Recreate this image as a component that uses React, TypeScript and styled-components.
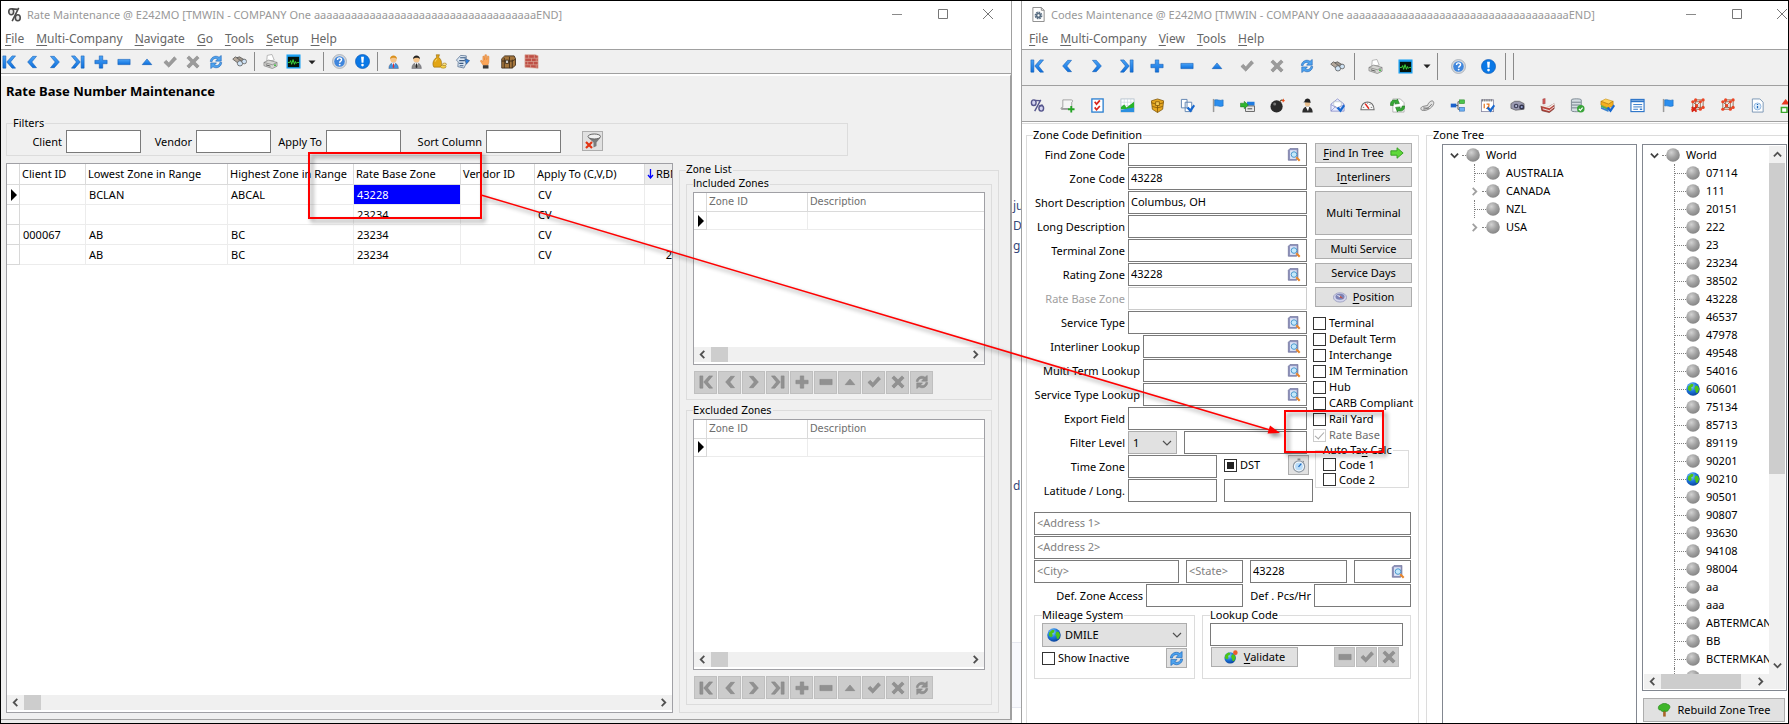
import React, { useEffect, useRef } from 'react';
import styled, { createGlobalStyle, css } from 'styled-components';

const UI = '"Noto Sans", "Open Sans", sans-serif';
const TAHOMA = '"DejaVu Sans Condensed", "DejaVu Sans", sans-serif';

const Global = createGlobalStyle`
  *, *::before, *::after { box-sizing: border-box; }
  body { margin: 0; font: 11px/14px ${UI}; color: #000; background: #fff; }
  button, input, select { font: inherit; color: inherit; margin: 0; border-radius: 0; }
  button { padding: 0; }
  u { text-underline-offset: 2px; }
  svg { display: block; flex: none; }
`;

/* ---------- icons ---------- */

const shapes: Record<string, React.ReactNode> = {
  first: <path d="M1 1h3.400v14H1zM11.500 1h4L9.800 8l5.700 7h-4L5.400 8z" />,
  prev: <path d="M8.800 1.500h4.400L7.800 8l5.400 6.500H8.800L3 8z" />,
  next: <path d="M7.200 1.500H2.800L8.200 8l-5.400 6.500h4.400L13 8z" />,
  last: <path d="M15 1h-3.400v14H15zM4.500 1h-4L6.200 8 .5 15h4l6.100-7z" />,
  plus: <path d="M6 1h4v5h5v4h-5v5H6v-5H1V6h5z" />,
  minus: <path d="M1 5h14v6H1z" />,
  up: <path d="M8 4.500 13.500 11h-11z" />,
  check: <path d="M1 8.500 3.800 6l2.800 3L12.800 2 15.500 4.500 6.600 14z" />,
  cross: <path d="M1 3.500 3.500 1 8 5.500 12.500 1 15 3.500 10.500 8l4.500 4.500-2.500 2.500L8 10.500 3.500 15 1 12.500 5.500 8z" />,
  refresh: (
    <path d="M1.500 7.500C1.500 3 7-.5 11.500 2.500L14 .5V7H7.500l2.300-2.600C7.200 3 4 4.500 3.600 7.500zM14.500 8.500c0 4.500-5.500 8-10 5L2 15.500V9h6.500l-2.300 2.600c2.600 1.400 5.800-.1 6.200-3.100z" />
  ),
};

const globeLand = <path d="M2.500 5 6 2l2.500.5L8 5l-2 1 .5 3-2 1.500L2 8.500zM11 4l2.500.5L15 8l-1.500 4-2 .5L10.500 9l-1-2z" fill="#4cc417" />;
const flag = (
  <>
    <path d="M3 1h1.600v14H3z" fill="#9a9a9a" />
    <path d="M5 2c3-1 5 1.500 9 0v6.500c-4 1.500-6-1-9 0z" fill="#2b8ff0" stroke="#1466b8" strokeWidth=".6" />
  </>
);
const tick = <path d="M7 11l2-1.700 2 2.200L14.500 7l1.500 1.500-4.700 7z" fill="#1768cf" />;
const person = (suit: string, hair: string, tie: string) => (
  <>
    <path d="M3 15.500c0-4 2-6 5-6s5.200 2 5.200 6z" fill={suit} stroke="#445" strokeWidth=".4" />
    <path d="M6.300 9.500h3.400L8 13.500z" fill="#fff" />
    <path d="M7.500 10h1l.4 4-.9 1-.9-1z" fill={tie} />
    <circle cx="8" cy="5.500" r="3.400" fill="#f6c58a" />
    <path d="M4.400 5.500C4 .3 12 .3 11.600 5.500 10 3.500 6.500 3.500 4.400 5.500z" fill={hair} />
  </>
);
const mesh = (
  <>
    <path d="M3 4h8v8H3zM11 4l3-2v8l-3 2M3 4l3-2h8M3 12l3-2h8M6 2v8M3 4l8 8M11 4l-8 8" fill="none" stroke="#8d5a3c" strokeWidth=".9" />
    {[[3, 4], [11, 4], [3, 12], [11, 12], [6, 2], [14, 2], [14, 10], [7, 8]].map(([x, y]) => (
      <circle key={`${x}-${y}`} cx={x} cy={y} r="1.700" fill="#ee4423" />
    ))}
  </>
);

const pictures: Record<string, React.ReactNode> = {
  binoculars: (
    <g stroke="#555" strokeWidth=".8">
      <path d="M.8 5.500 3.500 3l6 3-1.500 5z" fill="#b5a99c" />
      <path d="M5 4l3-1 6.500 4-3 2z" fill="#9d9489" />
      <circle cx="8.500" cy="10" r="2.800" fill="#cfe3f5" />
      <circle cx="13" cy="8" r="2.500" fill="#cfe3f5" />
    </g>
  ),
  printer: (
    <>
      <path d="M4 8 4.500 1.500l5-1 2.500 6z" fill="#fff" stroke="#999" strokeWidth=".7" />
      <path d="M1 9l5-2.500 9 2.500v4l-5 2.500L1 12.500z" fill="#d5d5d2" stroke="#777" strokeWidth=".7" />
      <path d="M1 9l9 2.500 5-2.500" fill="none" stroke="#777" strokeWidth=".7" />
      <path d="M3 11.500l5 1.500" stroke="#555" />
      <circle cx="12.800" cy="12" r="1" fill="#3b3" />
    </>
  ),
  monitor: (
    <>
      <rect x=".5" y=".5" width="15" height="15" fill="#1da1f2" />
      <rect x="2" y="3" width="12" height="11" fill="#04140a" />
      <path d="M2 9h2l1-2 1 4 1.500-5L9 11l1-3 1 2 1-1h2" fill="none" stroke="#3fe03f" />
    </>
  ),
  help: (
    <>
      <circle cx="8" cy="8" r="7.500" fill="#d3d7dd" stroke="#8b95a3" strokeWidth=".6" />
      <circle cx="8" cy="8" r="5.600" fill="#3f86dd" />
      <path d="M5.900 6.300c0-2.900 4.400-2.800 4.300-.2 0 1.500-2 1.600-2 3.200" fill="none" stroke="#fff" strokeWidth="1.500" />
      <circle cx="8.200" cy="11.300" r="1" fill="#fff" />
    </>
  ),
  alert: (
    <>
      <circle cx="8" cy="8" r="7.500" fill="#0a78e6" stroke="#0757b5" strokeWidth=".7" />
      <path d="M6.500 3h3L9 9.200H7z" fill="#fff" />
      <circle cx="8" cy="11.800" r="1.400" fill="#fff" />
    </>
  ),
  personBlue: person('#3f93e0', '#d9901c', '#d33'),
  personGray: person('#8b8b8b', '#222', '#222'),
  money: (
    <>
      <path d="M4.500.8h3.500l-1 2.700C11 6 11 13 9 14H2C0 11 1 6 5 3.500z" fill="#e2a514" stroke="#8f6508" strokeWidth=".6" />
      <path d="M3.500 8c.5-1.500 1-2 2-2.500" fill="none" stroke="#fbe38a" />
      <ellipse cx="12" cy="13.500" rx="3" ry="1.600" fill="#f7d24a" stroke="#9a7410" strokeWidth=".6" />
      <ellipse cx="13.300" cy="11" rx="2.200" ry="1.300" fill="#fbe38a" stroke="#9a7410" strokeWidth=".6" />
    </>
  ),
  roller: (
    <g stroke="#3b5a80" strokeWidth=".7">
      <path d="M1.500 6.500 6 1.500l6 .5 0 4 2.500 1-3 4-2 4-6.500-1.500.5-5z" fill="#dbe6f2" />
      <path d="M5.500 4h6M4.500 7h6M4.500 10H9M5 12.500h4" strokeWidth="1.200" />
      <path d="M10.500 5l5 2-3.500 4z" fill="#2b7de0" />
    </g>
  ),
  hand: (
    <>
      <path d="M5 11.500 2.500 7.500l1-1L5.200 8V2.500l1.400-.3.400 4L7.400.8 9 .8l.2 5.200 1-4 1.500.5L11.500 9l-1 3H6z" fill="#f9a55a" stroke="#d87a2a" strokeWidth=".5" />
      <rect x="5.200" y="12" width="6" height="3.500" fill="#3a3a3a" />
    </>
  ),
  chest: (
    <g stroke="#3a2a18" strokeWidth=".9">
      <path d="M.8 5 4 2h10l1.500 3v7L12 15H.8z" fill="#a5763c" />
      <path d="M.8 7.500H12l3.500-2M12 15V6M3.500 4v11M9 3v12" fill="none" />
      <rect x="5" y="6.500" width="2.800" height="3.500" fill="#e2e2e2" />
    </g>
  ),
  wall: (
    <g stroke="#dba898" strokeWidth=".7">
      <path d="M1 .8h11l3 1v13.500l-3-.3-11-1z" fill="#bf4f45" />
      <path d="M1 4.500h14M1 8h14M1 11.500h14M5 1v3.500M11 1v3.500M8 4.500V8M13 4.500V8M4 8v3.500M10 8v3.500M7 11.500V15M13 11.500V15" fill="none" />
    </g>
  ),
  percent: (
    <g fill="none" stroke="#55558c" strokeWidth="1.500">
      <ellipse cx="4" cy="5" rx="2.500" ry="3" fill="#d4d4f0" />
      <ellipse cx="12" cy="11" rx="2.500" ry="3" fill="#d4d4f0" />
      <path d="M11.500 2 5 14M5 2.500l6 .5M10 8.500l3.500-1" />
    </g>
  ),
  percentGray: (
    <g fill="none" stroke="#4a4a4a" strokeWidth="1.700">
      <ellipse cx="4.500" cy="5" rx="2.600" ry="3.200" fill="#e6e6e6" />
      <ellipse cx="11.500" cy="11.500" rx="2.600" ry="3.200" fill="#e6e6e6" />
      <path d="M12.500 1 5.500 15M5 2l6 .5" />
    </g>
  ),
  docGear: (
    <>
      <path d="M2 .5h9l3 3v12H2z" fill="#fff" stroke="#888" />
      <path d="M11 .5v3h3" fill="none" stroke="#888" />
      <circle cx="8" cy="9" r="3" fill="none" stroke="#5c7084" strokeWidth="2.400" strokeDasharray="1.600 .7" />
      <circle cx="8" cy="9" r="2" fill="none" stroke="#5c7084" strokeWidth="1.600" />
    </>
  ),
  scroll: (
    <>
      <path d="M3 2h9c2 0 2 2 .5 2.500V12H4c-3 1-4-1.500-2-2h1z" fill="#f4f4f4" stroke="#8d8d8d" strokeWidth=".8" />
      <path d="M1.500 11.500H9" stroke="#777" />
      <path d="M12 8.500v7M8.500 12h7" stroke="#25a325" strokeWidth="2" />
    </>
  ),
  checklist: (
    <>
      <rect x="2" y="1" width="12" height="14" fill="#fff" stroke="#2a7fd0" strokeWidth="1.400" />
      <path d="M5 4l2 2.500L10.500 2.500M5 10l2 2.500 3.500-4" fill="none" stroke="#d8261c" strokeWidth="1.800" />
    </>
  ),
  chart: (
    <>
      <rect x="1" y="1" width="14" height="14" fill="#fff" stroke="#a9b8c6" strokeWidth=".8" />
      <path d="M1 4.500h14M4.500 1v14M8 1v14M11.500 1v14M1 8h14" stroke="#c9d5e0" strokeWidth=".7" />
      <path d="M1 12V9.500L4.500 7l2.500 3 8-6v8z" fill="#27b327" />
      <path d="M1 12.500l6-1 8-1.500v5H1z" fill="#2b8fe0" />
    </>
  ),
  box: (
    <g stroke="#7b5206" strokeWidth=".8">
      <path d="M8 1l6.500 2-1 9L8 15.500 2.500 12l-1-9z" fill="#e6a720" />
      <path d="M1.500 5 8 7l6.500-2M8 7v8.500M2.500 9 8 10.500 13.500 9" fill="none" />
      <path d="M6 4h4v4H6z" fill="#f6cc58" />
    </g>
  ),
  copyCheck: (
    <>
      <path d="M1.500 1.500h6v9h-6zM5.500 4.500h7v10h-7z" fill="#fff" stroke="#5f83b0" />
      {tick}
    </>
  ),
  flag,
  arrowTable: (
    <>
      <rect x="7.500" y="4" width="8" height="4" fill="#1f7be0" />
      <rect x="6" y="8.500" width="9.500" height="6" fill="#e8e8e8" stroke="#444" strokeWidth=".8" />
      <path d="M8 11.500h5" stroke="#444" />
      <path d="M.5 5.500h4V3.500l4.500 4-4.500 4v-2h-4z" fill="#2fb52f" stroke="#157015" strokeWidth=".5" />
    </>
  ),
  bomb: (
    <>
      <circle cx="7" cy="9" r="6.500" fill="#2a2a2a" />
      <circle cx="5" cy="6.500" r="1.600" fill="#777" />
      <path d="M10.500 4c1-2 2.500-2 3.500-1.500" fill="none" stroke="#6b5335" strokeWidth="1.300" />
      <path d="M14.500.3l.4 1.500L16 3l-1.300.6-.9 1.400-.5-1.700-1.300-.8 1.700-.4z" fill="#f04a18" />
    </>
  ),
  agent: (
    <>
      <path d="M2.500 15.500c0-4 2-6.500 5.500-6.500s5.500 2.500 5.500 6.500z" fill="#2d2d2d" />
      <path d="M6 9h4l-1.500 5z" fill="#fff" />
      <circle cx="8" cy="6" r="2.800" fill="#e9c08f" />
      <path d="M3.500 4.500 5 3.500C5-.3 11-.3 11 3.500l.5 1.500z" fill="#222" />
    </>
  ),
  mailCheck: (
    <>
      <path d="M1 6.500 8 1l7 5.500V14H1z" fill="#e9ecff" stroke="#7d84c4" strokeWidth=".8" />
      <path d="M4 4h8v4l-4 2.500L4 8z" fill="#fff" stroke="#9aa" strokeWidth=".5" />
      <path d="M1 14l5-5M1 7l7 4 7-4" fill="none" stroke="#7d84c4" strokeWidth=".7" />
      {tick}
    </>
  ),
  gauge: (
    <>
      <path d="M1 12.500C1 1.500 15 1.500 15 12.500z" fill="#fafafa" stroke="#6d6d6d" strokeWidth="1.200" />
      <path d="M9.500 11.500 5.500 6" stroke="#e2231a" strokeWidth="1.500" />
      <path d="M3 10h1.500M11.500 10H13M8 5v1M11 6.500l-.8.8" stroke="#777" />
    </>
  ),
  recycle: (
    <>
      <path d="M3 1h8l4 4v10H3z" fill="#fff" stroke="#999" strokeWidth=".7" />
      <path d="M.5 8C0 3 3.500 1 7 2.500l.8-1.500 2.200 4.800-5 .7 1-1.700C4 4.200 3.300 6 3.500 8z" fill="#35a935" stroke="#1b701b" strokeWidth=".6" />
      <path d="M15.800 8.500c0 4.500-3.500 6.500-7 5l-.8 1.500-2-5 5-.5-1 1.600c2 .5 3-.8 3-2.600z" fill="#35a935" stroke="#1b701b" strokeWidth=".6" />
    </>
  ),
  clip: (
    <>
      <path d="M2 13c-2-1-1-3.500 1-4l5-1c1-3.500 4.500-6 6-4.500s.5 4.500-2.500 7-7.500 3.500-9.500 2.500z" fill="#e2e2e2" stroke="#777" strokeWidth=".9" />
      <path d="M3.500 12c3.500-.3 6.500-2 9-5.500M3.500 10.500l6 .5" fill="none" stroke="#777" />
    </>
  ),
  nodes: (
    <>
      <path d="M6 8h2.500M8.500 4v8h2M8.500 4h2" fill="none" stroke="#555" />
      <rect x=".8" y="6" width="6" height="4" fill="#1c62cc" />
      <rect x="10" y="2" width="5.500" height="4" fill="#4cc44c" stroke="#2a8a2a" strokeWidth=".6" />
      <rect x="10" y="10" width="5.500" height="4" fill="#6db0f5" stroke="#2a67b0" strokeWidth=".6" />
    </>
  ),
  calendar: (
    <>
      <rect x="1.500" y="2" width="13" height="12.500" fill="#fff" stroke="#8a8aa5" strokeWidth=".9" />
      <path d="M2 2.500h12" stroke="#666" strokeWidth="2.500" strokeDasharray="1 1" />
      <path d="M4.500 6v5M7 6.500h2.500v2L7.500 11h3" fill="none" stroke="#e8731c" strokeWidth="1.300" />
      {tick}
    </>
  ),
  camera: (
    <>
      <path d="M1 6l4-2.500h5L15 6v6l-9 1-5-2z" fill="#9a9ab0" stroke="#555" strokeWidth=".7" />
      <circle cx="6.500" cy="8.500" r="2.500" fill="#44445c" />
      <circle cx="6.500" cy="8.500" r="1" fill="#c9d3f0" />
      <circle cx="12.500" cy="9.500" r="2.700" fill="#33334a" />
      <circle cx="12.500" cy="9.500" r="1.100" fill="#9ad" />
    </>
  ),
  factory: (
    <>
      <path d="M3 6.500V1l2.500-.5V6z" fill="#d65a5a" stroke="#8c2a2a" strokeWidth=".4" />
      <path d="M1 8l8 1.500L15 6v5.500L10 15.500l-8-2z" fill="#b9443a" stroke="#6d2a24" strokeWidth=".7" />
      <path d="M0 7.500l10 2.500 5.500-4" fill="none" stroke="#f1ebe6" strokeWidth="1.500" />
      <path d="M3 11.500l7 2 5-4" fill="none" stroke="#eee" />
    </>
  ),
  database: (
    <>
      <path d="M1.500 2C1.500.5 12 .5 12 2v11.500c0 1.500-10.500 1.500-10.500 0z" fill="#d5dde3" stroke="#6f7d87" strokeWidth=".9" />
      <path d="M2 4.500h9.500M2 7.500h9.500M2 10.500h9.500" stroke="#6f7d87" />
      <circle cx="11.500" cy="11.500" r="4" fill="#3aa53a" />
      <path d="M9.500 11.500l1.500 1.700 2.500-3" fill="none" stroke="#fff" strokeWidth="1.300" />
    </>
  ),
  books: (
    <>
      <path d="M1 3.500 6 1l8 2.500-5 3z" fill="#ffd154" stroke="#c28a0a" strokeWidth=".6" />
      <path d="M1 3.500v4l8 3.500 5-3V3.500l-5 3z" fill="#f5b01f" stroke="#a96f06" strokeWidth=".6" />
      <path d="M1 7.500v2l8 3.500v-2z" fill="#58b04b" />
      <path d="M1 9.500v2L9 15v-2.500z" fill="#3c83cf" />
      {tick}
    </>
  ),
  form: (
    <>
      <rect x="1" y="1.500" width="14" height="13" fill="#fff" stroke="#2c74c8" strokeWidth="1.200" />
      <path d="M1 3.500h14" stroke="#2c74c8" strokeWidth="2" />
      <path d="M3.500 7H13M3.500 9.500H13M3.500 12h5" stroke="#2c74c8" />
      <path d="M10.500 12H13" stroke="#2c74c8" strokeWidth="1.500" />
    </>
  ),
  meshX: (
    <>
      {mesh}
      <path d="M2 9.500l5 5M7 9.500l-5 5" stroke="#d8200f" strokeWidth="2" />
    </>
  ),
  mesh,
  infoDoc: (
    <>
      <path d="M2.500 1h8l3.500 3.500V15H2.500z" fill="#fff" stroke="#7894b3" />
      <circle cx="8" cy="9" r="3.700" fill="#dcecfb" stroke="#7aa7d8" strokeWidth=".8" />
      <path d="M8 8.500V11M8 6.500v1" stroke="#1e66b5" strokeWidth="1.300" />
    </>
  ),
  blocks: (
    <>
      <path d="M6 1l4.500 6h-9z" fill="#e83a20" />
      <path d="M1.500 10h6v5.500h-6z" fill="#fff" stroke="#3ba82b" strokeWidth="1.600" />
      <rect x="9" y="7" width="6" height="8" fill="#2d63c9" />
    </>
  ),
  filterOff: (
    <>
      <path d="M3 4.500l5.500 5v5l3-1.500V9.500L15.500 4.500z" fill="#7b7b7b" />
      <ellipse cx="9.300" cy="3.500" rx="6.300" ry="2.500" fill="#f1f1f1" stroke="#666" />
      <path d="M1 9l6 6M7 9l-6 6" stroke="#e23413" strokeWidth="2.200" />
    </>
  ),
  lookup: (
    <>
      <path d="M1.500 2.500l2-2H12.500v11.500L11 14H1.500z" fill="#8f93bd" stroke="#62668f" strokeWidth=".7" />
      <rect x="3.500" y="2.500" width="7.500" height="10" fill="#dfe5f8" />
      <circle cx="8" cy="7.500" r="3.200" fill="#c3e8fb" stroke="#3c8fc7" />
      <path d="M10.500 10.500l4 4" stroke="#e8872c" strokeWidth="2.400" />
    </>
  ),
  arrowGo: <path d="M1 5.500h7V2l7 6-7 6v-3.500H1z" fill="#5fd83a" stroke="#2f9a1c" />,
  compass: (
    <>
      <ellipse cx="8" cy="8.500" rx="7.500" ry="5.300" fill="#d3d5ee" stroke="#8a8eb5" strokeWidth=".8" />
      <ellipse cx="8" cy="7.800" rx="5.200" ry="3.400" fill="#7d83b5" />
      <path d="M3.800 5.500l4.700 1.300-.8 1.600z" fill="#f3f3ff" />
      <path d="M12 10l-4.500-1.700.8-1.500z" fill="#d8452b" />
    </>
  ),
  watch: (
    <>
      <path d="M7 .5h3v2H7zM12.500 2.500l1.500 1.300-1 1.200z" fill="#8a8a8a" />
      <circle cx="8.500" cy="9" r="6" fill="#fff" stroke="#8e9aa6" strokeWidth="1.300" />
      <circle cx="8.500" cy="9" r="4.200" fill="#b9dcf8" />
      <path d="M8 9.500l3-3.500" stroke="#1d69c0" strokeWidth="1.400" />
    </>
  ),
  globe: (
    <>
      <circle cx="8" cy="8" r="7.700" fill="url(#ocean)" />
      {globeLand}
    </>
  ),
  globePin: (
    <>
      <circle cx="7" cy="9" r="6.500" fill="url(#ocean)" />
      <g transform="translate(-1 1) scale(.95)">{globeLand}</g>
      <circle cx="13" cy="3" r="2.600" fill="#ec5a2a" />
    </>
  ),
  globeOff: <circle cx="8" cy="8" r="7.800" fill="url(#ball)" />,
  tree: (
    <>
      <path d="M7 9h3v6.500H7z" fill="#a8652a" />
      <path d="M1.500 6C1 3 4 2 5 1.500 7 0 10-.2 12 1.500c3 .5 3.800 4 1.500 5.500-.5 3-4 3-5 2-2 1.500-4 .5-4-1C3 8.500 1.500 7.500 1.500 6z" fill="#3fb52a" stroke="#1f7c14" strokeWidth=".6" />
    </>
  ),
  down: <path d="M1 5h14L8 12.500z" fill="#222" />,
};

const Icon = ({ name, size = 16, off }: { name: string; size?: number; off?: boolean }) => {
  const gray = off || name === 'check' || name === 'cross';
  const fill = gray ? (off ? '#919191' : '#9b9b9b') : name === 'refresh' ? '#4fa3ee' : 'url(#blue)';
  return (
    <svg width={size} height={size} viewBox="0 0 16 16" aria-hidden="true">
      {shapes[name] ? (
        <g fill={fill} stroke={gray ? '#838383' : '#0b57b0'} strokeWidth=".6">
          {shapes[name]}
        </g>
      ) : (
        pictures[name]
      )}
    </svg>
  );
};

const turns = { down: 0, up: 180, right: -90, left: 90 };
const Chevron = ({ to, color = '#505050', size = 9, bold }: { to: keyof typeof turns; color?: string; size?: number; bold?: boolean }) => (
  <svg width={size} height={size} viewBox="0 0 10 10" aria-hidden="true">
    <path d="M1 3l4 4 4-4" fill="none" stroke={color} strokeWidth={bold ? 2 : 1.2} transform={`rotate(${turns[to]} 5 5)`} />
  </svg>
);

/* ---------- window frame ---------- */

const Desktop = styled.div`
  position: relative;
  display: grid;
  grid-template-columns: minmax(0, 1011fr) 9px minmax(0, 767fr);
  height: 100vh;
  border: 1px solid #000;
  overflow: hidden;
`;
const LeftSide = styled.div`
  display: flex;
  flex-direction: column;
  min-height: 0;
  padding-bottom: 3px;
  background: #ececec;
`;
const Window = styled.section<{ $side: 'left' | 'right' }>`
  display: flex;
  flex-direction: column;
  flex: 1;
  min-height: 0;
  min-width: 0;
  background: #fff;
  ${p => (p.$side === 'left'
    ? css`border-right: 1px solid #a0a0a0; border-bottom: 1px solid #a0a0a0;`
    : css`border-left: 1px solid #a0a0a0;`)}
`;
const TitleBar = styled.header<{ $inset: number }>`
  display: flex;
  align-items: center;
  flex: none;
  height: 27px;
  padding-left: ${p => p.$inset}px;
  gap: 5px;
  color: #999;
  overflow: hidden;
  white-space: nowrap;
`;
const Title = styled.h1`
  flex: 1;
  margin: 0;
  min-width: 0;
  overflow: hidden;
  font-size: 11px;
  font-weight: 400;
`;
const Caption = styled.div<{ $clip?: boolean }>`
  display: flex;
  justify-content: space-between;
  width: 102px;
  margin-right: ${p => (p.$clip ? 0 : 17)}px;
`;
const PlainButton = styled.button`
  display: grid;
  place-items: center;
  border: 0;
  background: none;
`;
const ToolButton = styled(PlainButton)`
  flex: none;
  width: 16px;
  height: 16px;
`;
const MenuBar = styled.nav<{ $inset: number }>`
  display: flex;
  align-items: center;
  flex: none;
  gap: 12px;
  height: 21px;
  padding-left: ${p => p.$inset}px;
  font-size: 12px;
  color: #666;
`;
const MenuItem = styled.button`
  padding: 0;
  border: 0;
  background: none;
`;
const ToolBar = styled.div<{ $size: 'small' | 'large' | 'second' }>`
  display: flex;
  align-items: center;
  flex: none;
  overflow: hidden;
  background: #f0f0f0;
  border-bottom: 1px solid #a0a0a0;
  ${p => p.$size === 'small' && css`gap: 7px; height: 25px; border-top: 1px solid #a0a0a0;`}
  ${p => p.$size === 'large' && css`gap: 14px; height: 37px; padding: 0 0 3px 7px; border-top: 1px solid #a0a0a0;`}
  ${p => p.$size === 'second' && css`gap: 14px; height: 36px; padding: 3px 0 0 7px;`}
`;
const Divider = styled.span<{ $large?: boolean }>`
  flex: none;
  width: 1px;
  height: ${p => (p.$large ? 27 : 19)}px;
  background: #8a8a8a;
  ${p => p.$large && css`margin: 0 -2px 0 -5px;`}
`;
const DropButton = styled(PlainButton)<{ $large?: boolean }>`
  width: 8px;
  ${p => p.$large && css`margin: 0 -3px 0 -4px;`}
`;

const Accel = ({ text }: { text: string }) => {
  const [before, rest] = text.split('_');
  return rest === undefined ? <span>{before}</span> : <span>{before}<u>{rest[0]}</u>{rest.slice(1)}</span>;
};

const WindowTop = ({ icon, title, menus, clip }: { icon: string; title: string; menus: string[]; clip?: boolean }) => (
  <>
    <TitleBar $inset={clip ? 9 : 6}>
      <Icon name={icon} size={15} />
      <Title>{title}</Title>
      <Caption $clip={clip}>
        <PlainButton aria-label="Minimize">
          <svg width="11" height="11"><path d="M0 5.500h10" stroke="#8a8a8a" /></svg>
        </PlainButton>
        <PlainButton aria-label="Maximize">
          <svg width="11" height="11"><path d="M.5.5h9v9h-9z" fill="none" stroke="#777" /></svg>
        </PlainButton>
        <PlainButton aria-label="Close">
          <svg width="11" height="11"><path d="M0 0l10 10M10 0L0 10" stroke="#777" /></svg>
        </PlainButton>
      </Caption>
    </TitleBar>
    <MenuBar $inset={clip ? 7 : 4}>
      {menus.map(m => <MenuItem key={m}><Accel text={m} /></MenuItem>)}
    </MenuBar>
  </>
);

const NAV = ['first', 'prev', 'next', 'last', 'plus', 'minus', 'up', 'check', 'cross', 'refresh'];
const COMMON = [...NAV, 'binoculars', '|', 'printer', 'monitor', 'down', '|', 'help', 'alert', '|'];

const Tools = ({ items, large }: { items: string[]; large?: boolean }) => (
  <>
    {items.map((n, i) => {
      if (n === '|') return <Divider key={i} $large={large} />;
      if (n === 'down') return <DropButton key={i} $large={large} aria-label="More"><Icon name="down" size={8} /></DropButton>;
      return <ToolButton key={i} aria-label={n}><Icon name={n} size={NAV.includes(n) ? 14 : 15} /></ToolButton>;
    })}
  </>
);

/* ---------- shared controls ---------- */

const Group = styled.fieldset`
  display: flex;
  flex-direction: column;
  min-width: 0;
  min-height: 0;
  margin: 0;
  padding: 0;
  border: 1px solid #dcdcdc;
`;
const GroupTitle = styled.legend<{ $tahoma?: boolean; $flush?: boolean }>`
  height: 14px;
  margin-left: ${p => (p.$flush ? 0 : 6)}px;
  padding: 0 1px 0 0;
  line-height: 14px;
  white-space: nowrap;
  ${p => p.$tahoma && css`font-family: ${TAHOMA};`}
`;
const TextBox = styled.input`
  width: 100%;
  min-width: 0;
  height: 23px;
  padding: 0 2px 2px;
  border: 1px solid #7a7a7a;
  background: #fff;
  outline: 0;
  &::placeholder { color: #808080; opacity: 1; }
  &:disabled { border-color: #ccc; }
`;
const LookupFrame = styled.span`
  display: flex;
  align-items: center;
  flex: 1;
  min-width: 0;
  height: 23px;
  padding-right: 5px;
  border: 1px solid #7a7a7a;
  background: #fff;
`;
const BareInput = styled.input`
  flex: 1;
  min-width: 0;
  width: 0;
  height: 21px;
  padding: 0 2px 2px;
  border: 0;
  background: none;
  outline: 0;
`;
const LookupBox = ({ id, value = '', label }: { id: string; value?: string; label?: string }) => (
  <LookupFrame>
    <BareInput id={id} defaultValue={value} aria-label={label} />
    <PlainButton aria-label="Look up"><Icon name="lookup" size={14} /></PlainButton>
  </LookupFrame>
);
const PushButton = styled.button<{ $tall?: boolean }>`
  display: flex;
  align-items: center;
  justify-content: center;
  gap: 6px;
  height: ${p => (p.$tall ? 44 : 20)}px;
  border: 1px solid #adadad;
  background: #e1e1e1;
  white-space: nowrap;
`;
const IconButton = styled.button<{ $kind?: 'off' }>`
  display: grid;
  place-items: center;
  width: 21px;
  height: 20px;
  border: 1px solid ${p => (p.$kind ? '#bfbfbf' : '#adadad')};
  background: ${p => (p.$kind ? '#ccc' : '#e1e1e1')};
`;
const CheckRow = styled.label<{ $dim?: boolean; $short?: boolean }>`
  display: flex;
  align-items: center;
  gap: 3px;
  height: ${p => (p.$short ? 15 : 16)}px;
  white-space: nowrap;
  color: ${p => (p.$dim ? '#6d6d6d' : '#000')};
`;
const Box = styled.input`
  appearance: none;
  display: grid;
  place-items: center;
  flex: none;
  width: 13px;
  height: 13px;
  border: 1px solid #333;
  background: #fff;
  &:disabled { border-color: #ccc; }
  &:indeterminate::after { content: ''; width: 7px; height: 7px; background: #222; }
  &:checked::after {
    content: '';
    width: 5px;
    height: 9px;
    margin-bottom: 3px;
    border: solid #a8a8a8;
    border-width: 0 1px 1px 0;
    transform: rotate(42deg);
  }
`;
const Check = ({ text, short, mixed, ...rest }: { text: string; short?: boolean; mixed?: boolean; disabled?: boolean; defaultChecked?: boolean }) => {
  const ref = useRef<HTMLInputElement>(null);
  useEffect(() => { if (ref.current && mixed) ref.current.indeterminate = true; }, [mixed]);
  return (
    <CheckRow $dim={rest.disabled} $short={short}>
      <Box ref={ref} type="checkbox" {...rest} />
      {text}
    </CheckRow>
  );
};
const SelectFrame = styled.span<{ $icon?: boolean }>`
  display: grid;
  grid-template-columns: ${p => (p.$icon ? '22px' : '3px')} 1fr 18px;
  align-items: center;
  justify-items: center;
  height: ${p => (p.$icon ? 24 : 23)}px;
  border: 1px solid #adadad;
  background: #e1e1e1;
  > svg { grid-row: 1; pointer-events: none; }
  > svg:first-child { grid-column: 1; }
  > svg:last-child { grid-column: 3; }
`;
const Select = styled.select`
  appearance: none;
  grid-row: 1;
  grid-column: 1 / -1;
  width: 100%;
  height: 100%;
  padding: 0 18px 0 4px;
  border: 0;
  background: none;
  outline: 0;
  ${SelectFrame} > svg + & { padding-left: 22px; }
`;

/* ---------- scroll bars ---------- */

const Bar = styled.div<{ $vertical?: boolean; $corner?: boolean }>`
  display: flex;
  flex: none;
  flex-direction: ${p => (p.$vertical ? 'column' : 'row')};
  ${p => (p.$vertical ? css`width: 16px;` : css`height: 15px;`)}
  ${p => p.$corner && css`padding-right: 16px;`}
  background: #f0f0f0;
`;
const BarEnd = styled(PlainButton)`
  flex: 0 0 17px;
`;
const Thumb = styled.div<{ $size?: number }>`
  ${p => (p.$size ? css`flex: ${p.$size} 1 0;` : css`flex: 0 0 17px;`)}
  background: #cdcdcd;
`;
const Track = styled.div<{ $size: number }>`
  flex: ${p => p.$size} 1 0;
`;
const ScrollBar = ({ vertical, corner, thumb, rest = 1 }: { vertical?: boolean; corner?: boolean; thumb?: number; rest?: number }) => (
  <Bar $vertical={vertical} $corner={corner}>
    <BarEnd aria-label="Scroll back"><Chevron to={vertical ? 'up' : 'left'} bold /></BarEnd>
    <Thumb $size={thumb} />
    <Track $size={rest} />
    <BarEnd aria-label="Scroll forward"><Chevron to={vertical ? 'down' : 'right'} bold /></BarEnd>
  </Bar>
);

/* ---------- rate maintenance ---------- */

const RateBody = styled.main`
  display: flex;
  flex-direction: column;
  flex: 1;
  min-height: 0;
  padding: 6px 11px 6px 5px;
  border-top: 2px solid #fff;
  border-right: 1px solid #a0a0a0;
  background: #f0f0f0;
`;
const Heading = styled.h2`
  margin: 0 0 16px;
  font-size: 13px;
  line-height: 18px;
`;
const FilterGroup = styled(Group)`
  max-width: 842px;
  margin-bottom: 7px;
`;
const FilterRow = styled.div`
  display: flex;
  align-items: flex-start;
  padding-bottom: 2px;
`;
const FilterLabel = styled.label<{ $w: number }>`
  width: ${p => p.$w}px;
  padding-right: 4px;
  line-height: 23px;
  text-align: right;
  white-space: nowrap;
`;
const FilterInput = styled(TextBox)`
  flex: 0 1 75px;
`;
const ClearFilter = styled(IconButton)`
  margin: 1px 0 0 21px;
`;
const Columns = styled.div`
  display: grid;
  grid-template-columns: minmax(0, 667fr) minmax(0, 320fr);
  gap: 6px;
  flex: 1;
  min-height: 0;
`;
const GridFrame = styled.div`
  display: flex;
  flex-direction: column;
  justify-content: space-between;
  flex: 1;
  min-height: 0;
  padding-bottom: 2px;
  border: 1px solid #a0a0a5;
  background: #fff;
  overflow: hidden;
`;
const Table = styled.table<{ $zones?: boolean }>`
  width: 100%;
  table-layout: fixed;
  border-collapse: separate;
  border-spacing: 0;
  th, td {
    height: ${p => (p.$zones ? 18 : 20)}px;
    padding: 0 0 0 3px;
    overflow: hidden;
    white-space: nowrap;
    text-align: left;
    font-weight: 400;
    border: solid #ececec;
    border-width: 0 1px 1px 0;
  }
  th { height: ${p => (p.$zones ? 19 : 21)}px; padding-left: 2px; border-color: #dadada; }
  td:first-child { border-color: #d8d8d8; }
  th:last-child, td:last-child { border-right: 0; }
  ${p => p.$zones && css`font-family: ${TAHOMA}; th { color: #6d6d6d; }`}
`;
const Col = styled.col<{ $w?: number }>`
  ${p => p.$w && css`width: ${p.$w}px;`}
`;
const Picked = styled.td`
  background: #0000ff;
  background-clip: padding-box;
  color: #fff;
`;
const Clipped = styled.td`
  && { text-align: right; }
`;
const SortHead = styled.th`
  && { background: #ececec; }
  svg { display: inline-block; vertical-align: -1px; margin-right: 2px; }
`;
const Marker = () => <svg width="7" height="12" aria-label="Current row"><path d="M1 0l6 6-6 6z" /></svg>;

const NavButtons = styled.div`
  display: flex;
  gap: 1px;
  padding: 6px 0 5px 1px;
`;
const NavButton = styled(IconButton)`
  width: 23px;
  height: 23px;
`;
const ZoneListGroup = styled(Group)`
  gap: 4px;
  padding: 0 6px 7px;
`;
const ZoneGroup = styled(Group)<{ $share: number }>`
  flex: ${p => p.$share} 1 0;
  padding: 1px 6px 0;
`;

const rates = [
  ['', 'BCLAN', 'ABCAL', '43228', '', 'CV', ''],
  ['', '', '', '23234', '', 'CV', ''],
  ['000067', 'AB', 'BC', '23234', '', 'CV', ''],
  ['', 'AB', 'BC', '23234', '', 'CV', '2'],
];
const rateHeads = ['Client ID', 'Lowest Zone in Range', 'Highest Zone in Range', 'Rate Base Zone', 'Vendor ID', 'Apply To (C,V,D)'];

const RateGrid = () => (
  <GridFrame>
    <Table>
      <colgroup>
        {[13, 66, 142, 126, 107, 74, 110].map((w, i) => <Col key={i} $w={w} />)}
        <Col />
      </colgroup>
      <thead>
        <tr>
          <th aria-label="Row marker" />
          {rateHeads.map(h => <th key={h}>{h}</th>)}
          <SortHead>
            <svg width="7" height="10"><path d="M3.500 0v9M1 6l2.500 3L6 6" fill="none" stroke="#00f" strokeWidth="1.300" /></svg>
            RBN
          </SortHead>
        </tr>
      </thead>
      <tbody>
        {rates.map((r, i) => (
          <tr key={i}>
            <td>{i === 0 && <Marker />}</td>
            {r.map((c, j) => {
              if (i === 0 && j === 3) return <Picked key={j}>{c}</Picked>;
              if (j === 6) return <Clipped key={j}>{c}</Clipped>;
              return <td key={j}>{c}</td>;
            })}
          </tr>
        ))}
      </tbody>
    </Table>
    <ScrollBar />
  </GridFrame>
);

const ZonePanel = ({ title, share }: { title: string; share: number }) => (
  <ZoneGroup $share={share}>
    <GroupTitle $tahoma $flush>{title}</GroupTitle>
    <GridFrame>
      <Table $zones>
        <colgroup><Col $w={13} /><Col $w={101} /><Col /></colgroup>
        <thead><tr><th aria-label="Row marker" /><th>Zone ID</th><th>Description</th></tr></thead>
        <tbody><tr><td><Marker /></td><td /><td /></tr></tbody>
      </Table>
      <ScrollBar />
    </GridFrame>
    <NavButtons>
      {NAV.map(n => <NavButton key={n} $kind="off" disabled aria-label={n}><Icon name={n} size={14} off /></NavButton>)}
    </NavButtons>
  </ZoneGroup>
);

const RateWindow = () => (
  <LeftSide>
    <Window $side="left">
      <WindowTop
        icon="percentGray"
        title="Rate Maintenance @ E242MO [TMWIN - COMPANY One aaaaaaaaaaaaaaaaaaaaaaaaaaaaaaaaaaaaEND]"
        menus={['_File', '_Multi-Company', '_Navigate', '_Go', '_Tools', '_Setup', '_Help']}
      />
      <ToolBar $size="small">
        <Tools items={[...COMMON, 'personBlue', 'personGray', 'money', 'roller', 'hand', 'chest', 'wall']} />
      </ToolBar>
      <RateBody>
        <Heading>Rate Base Number Maintenance</Heading>
        <FilterGroup>
          <GroupTitle>Filters</GroupTitle>
          <FilterRow>
            <FilterLabel $w={59} htmlFor="client">Client</FilterLabel><FilterInput id="client" />
            <FilterLabel $w={55} htmlFor="vendor">Vendor</FilterLabel><FilterInput id="vendor" />
            <FilterLabel $w={55} htmlFor="apply">Apply To</FilterLabel><FilterInput id="apply" />
            <FilterLabel $w={85} htmlFor="sort">Sort Column</FilterLabel><FilterInput id="sort" />
            <ClearFilter aria-label="Clear filters"><Icon name="filterOff" /></ClearFilter>
          </FilterRow>
        </FilterGroup>
        <Columns>
          <RateGrid />
          <ZoneListGroup>
            <GroupTitle $tahoma $flush>Zone List</GroupTitle>
            <ZonePanel title="Included Zones" share={222} />
            <ZonePanel title="Excluded Zones" share={301} />
          </ZoneListGroup>
        </Columns>
      </RateBody>
    </Window>
  </LeftSide>
);

/* ---------- page seen between the windows ---------- */

const Behind = styled.aside`
  display: flex;
  flex-direction: column;
  padding-top: 195px;
  overflow: hidden;
  font-size: 12px;
  line-height: 20px;
  white-space: nowrap;
  color: #35477a;
  background: #fff;
`;
const BehindLine = styled.span<{ $gap?: number }>`
  padding-left: 1px;
  margin-bottom: ${p => p.$gap ?? 0}px;
`;
const BehindCard = styled.span`
  height: 66px;
  background: #f8f9fd;
  border: solid #e6e8f0;
  border-width: 1px 0;
`;

/* ---------- codes maintenance ---------- */

const CodesBody = styled.main`
  display: grid;
  grid-template-columns: minmax(0, 393fr) minmax(0, 362fr);
  gap: 7px;
  flex: 1;
  min-height: 0;
  margin-top: 1px;
  padding: 4px 0 0 4px;
  border-top: 1px solid #dcdcdc;
`;
const OpenGroup = styled(Group)<{ $openRight?: boolean }>`
  border-bottom: 0;
  ${p => p.$openRight && css`border-right: 0;`}
`;
const FormTop = styled.div`
  display: grid;
  grid-template-columns: minmax(0, 1fr) 105px;
  gap: 6px;
  padding-top: 1px;
`;
const FieldRow = styled.div<{ $wide?: boolean }>`
  display: flex;
  align-items: flex-start;
  height: 24px;
  > label:first-child { flex: 0 0 ${p => (p.$wide ? 116 : 101)}px; }
`;
const FieldLabel = styled.label<{ $dim?: boolean }>`
  padding-right: 3px;
  line-height: 23px;
  text-align: right;
  white-space: nowrap;
  color: ${p => (p.$dim ? '#a0a0a0' : '#000')};
`;
const FixedField = styled.span<{ $w: number; $pull?: boolean }>`
  display: grid;
  flex: 0 0 ${p => p.$w}px;
  margin-right: 7px;
  ${p => p.$pull && css`margin-right: -5px;`}
`;
const DstField = styled.span`
  display: flex;
  justify-content: space-between;
  flex: 1;
  align-items: center;
  height: 20px;
  margin-right: -2px;
`;
const SideColumn = styled.div`
  display: flex;
  flex-direction: column;
  gap: 4px;
  padding-right: 6px;
  padding-left: 2px;
`;
const Checks = styled.div`
  margin: 4px -6px 0 -2px;
  overflow: hidden;
`;
const TaxGroup = styled(Group)`
  margin: -4px 3px 0 0;
  padding: 0 7px;
`;
const AddressGrid = styled.div`
  display: flex;
  flex-direction: column;
  gap: 1px;
  padding: 9px 7px 1px;
`;
const CityRow = styled.div`
  display: grid;
  grid-template-columns: minmax(0, 1fr) 57px 97px 57px;
  gap: 7px;
`;
const DefRow = styled.div`
  display: grid;
  grid-template-columns: minmax(0, 1fr) 97px 71px 97px;
`;
const BottomGroups = styled.div`
  display: grid;
  grid-template-columns: minmax(0, 161fr) minmax(0, 209fr);
  gap: 7px;
  padding: 0 7px;
`;
const SmallGroup = styled(Group)`
  gap: 1px;
  padding: 1px 7px 10px;
`;
const ButtonRow = styled.div`
  display: flex;
  gap: 1px;
  align-items: center;
  justify-content: space-between;
`;
const OffButtons = styled.div`
  display: flex;
  gap: 1px;
  margin-right: 4px;
`;
const ValidateButton = styled(PushButton)`
  width: 87px;
  margin-left: 1px;
`;

const Field = ({ label, wide, lookup, value, dim }: { label: string; wide?: boolean; lookup?: boolean; value?: string; dim?: boolean }) => {
  const id = label.toLowerCase().replace(/\W+/g, '-');
  return (
    <FieldRow $wide={wide}>
      <FieldLabel htmlFor={id} $dim={dim}>{label}</FieldLabel>
      {lookup ? <LookupBox id={id} value={value} /> : <TextBox id={id} defaultValue={value} disabled={dim} />}
    </FieldRow>
  );
};

const ZoneForm = () => (
  <OpenGroup>
    <GroupTitle>Zone Code Definition</GroupTitle>
    <FormTop>
      <div>
        <Field label="Find Zone Code" lookup />
        <Field label="Zone Code" value="43228" />
        <Field label="Short Description" value="Columbus, OH" />
        <Field label="Long Description" />
        <Field label="Terminal Zone" lookup />
        <Field label="Rating Zone" lookup value="43228" />
        <Field label="Rate Base Zone" dim />
        <Field label="Service Type" lookup />
        <Field label="Interliner Lookup" wide lookup />
        <Field label="Multi Term Lookup" wide lookup />
        <Field label="Service Type Lookup" wide lookup />
        <Field label="Export Field" />
        <FieldRow>
          <FieldLabel htmlFor="filter-level">Filter Level</FieldLabel>
          <FixedField $w={49}>
            <SelectFrame>
              <Select id="filter-level"><option>1</option></Select>
              <Chevron to="down" size={10} />
            </SelectFrame>
          </FixedField>
          <TextBox aria-label="Filter value" />
        </FieldRow>
        <FieldRow>
          <FieldLabel htmlFor="time-zone">Time Zone</FieldLabel>
          <FixedField $w={89}><TextBox id="time-zone" /></FixedField>
          <DstField>
            <Check text="DST" mixed />
            <IconButton aria-label="Set time"><Icon name="watch" size={15} /></IconButton>
          </DstField>
        </FieldRow>
        <FieldRow>
          <FieldLabel htmlFor="latitude">Latitude / Long.</FieldLabel>
          <FixedField $w={89}><TextBox id="latitude" /></FixedField>
          <FixedField $w={89} $pull><TextBox aria-label="Longitude" /></FixedField>
        </FieldRow>
      </div>
      <SideColumn>
        <PushButton><Accel text="_Find In Tree" /><Icon name="arrowGo" size={14} /></PushButton>
        <PushButton><Accel text="I_nterliners" /></PushButton>
        <PushButton $tall>Multi Terminal</PushButton>
        <PushButton>Multi Service</PushButton>
        <PushButton>Service Days</PushButton>
        <PushButton><Icon name="compass" size={14} /><Accel text="_Position" /></PushButton>
        <Checks>
          {['Terminal', 'Default Term', 'Interchange', 'IM Termination', 'Hub', 'CARB Compliant', 'Rail Yard'].map(t => <Check key={t} text={t} />)}
          <Check text="Rate Base" disabled defaultChecked />
        </Checks>
        <TaxGroup>
          <GroupTitle $flush><Accel text="Auto Ta_x Calc" /></GroupTitle>
          <Check text="Code 1" short />
          <Check text="Code 2" short />
        </TaxGroup>
      </SideColumn>
    </FormTop>
    <AddressGrid>
      <TextBox placeholder="<Address 1>" aria-label="Address 1" />
      <TextBox placeholder="<Address 2>" aria-label="Address 2" />
      <CityRow>
        <TextBox placeholder="<City>" aria-label="City" />
        <TextBox placeholder="<State>" aria-label="State" />
        <TextBox defaultValue="43228" aria-label="Postal code" />
        <LookupBox id="country" label="Country" />
      </CityRow>
      <DefRow>
        <FieldLabel htmlFor="def-access">Def. Zone Access</FieldLabel>
        <TextBox id="def-access" />
        <FieldLabel htmlFor="def-pcs">Def . Pcs/Hr</FieldLabel>
        <TextBox id="def-pcs" />
      </DefRow>
    </AddressGrid>
    <BottomGroups>
      <SmallGroup>
        <GroupTitle $flush>Mileage System</GroupTitle>
        <SelectFrame $icon>
          <Icon name="globe" size={14} />
          <Select aria-label="Mileage system"><option>DMILE</option></Select>
          <Chevron to="down" size={10} />
        </SelectFrame>
        <ButtonRow>
          <Check text="Show Inactive" />
          <IconButton aria-label="Refresh"><Icon name="refresh" size={15} /></IconButton>
        </ButtonRow>
      </SmallGroup>
      <SmallGroup>
        <GroupTitle $flush>Lookup Code</GroupTitle>
        <TextBox aria-label="Lookup code" />
        <ButtonRow>
          <ValidateButton><Icon name="globePin" size={14} /><Accel text="_Validate" /></ValidateButton>
          <OffButtons>
            {['minus', 'check', 'cross'].map(n => (
              <IconButton key={n} $kind="off" disabled aria-label={n}><Icon name={n} size={14} off /></IconButton>
            ))}
          </OffButtons>
        </ButtonRow>
      </SmallGroup>
    </BottomGroups>
  </OpenGroup>
);

/* ---------- zone tree ---------- */

const TreePanes = styled.div`
  display: grid;
  grid-template-columns: minmax(0, 195fr) minmax(0, 145fr);
  gap: 5px;
  flex: 1;
  min-height: 0;
  padding: 2px 1px 0 15px;
`;
const TreeSide = styled.div`
  display: flex;
  flex-direction: column;
  gap: 7px;
  min-height: 0;
  padding-bottom: 1px;
`;
const Pane = styled.div<{ $open?: boolean }>`
  display: flex;
  flex-direction: column;
  flex: 1;
  min-height: 0;
  padding: 1px;
  border: 1px solid #828790;
  ${p => p.$open && css`border-bottom: 0;`}
`;
const PaneRow = styled.div`
  display: flex;
  flex: 1;
  min-height: 0;
`;
const TreeList = styled.ul`
  flex: 1;
  min-width: 0;
  margin: 0;
  padding: 0;
  list-style: none;
  overflow: hidden;
`;
const TreeNode = styled.li<{ $child?: boolean }>`
  display: flex;
  align-items: center;
  height: 18px;
  padding-left: ${p => (p.$child ? 30 : 4)}px;
  line-height: 16px;
  white-space: nowrap;
`;
const Branch = styled.span`
  display: flex;
  align-items: center;
  flex: none;
  width: 12px;
  height: 18px;
  border-left: 1px dotted #808080;
`;
const Dash = styled.span<{ $short?: boolean }>`
  flex: ${p => (p.$short ? '0 0 4px' : '1')};
  border-top: 1px dotted #808080;
`;
const Toggle = styled(PlainButton)`
  flex: none;
  width: 12px;
  margin-right: 2px;
`;
const ChildToggle = styled(PlainButton)`
  flex: none;
  width: 12px;
  margin-left: -6px;
  margin-right: 2px;
`;
const NodeText = styled.span`
  margin-left: 6px;
`;

type Node = { name: string; more?: boolean; live?: boolean };
const Tree = ({ nodes }: { nodes: Node[] }) => (
  <TreeList>
    <TreeNode>
      <Toggle aria-label="Collapse World"><Chevron to="down" bold color="#404040" size={9} /></Toggle>
      <Dash $short />
      <Icon name="globeOff" size={14} />
      <NodeText>World</NodeText>
    </TreeNode>
    {nodes.map(n => (
      <TreeNode key={n.name} $child>
        {n.more ? (
          <>
            <ChildToggle aria-label={`Expand ${n.name}`}><Chevron to="right" bold color="#a0a0a0" size={9} /></ChildToggle>
            <Dash $short />
          </>
        ) : (
          <Branch><Dash /></Branch>
        )}
        <Icon name={n.live ? 'globe' : 'globeOff'} size={14} />
        <NodeText>{n.name}</NodeText>
      </TreeNode>
    ))}
  </TreeList>
);

const countries: Node[] = [{ name: 'AUSTRALIA' }, { name: 'CANADA', more: true }, { name: 'NZL' }, { name: 'USA', more: true }];
const zones: Node[] = [
  '07114', '111', '20151', '222', '23', '23234', '38502', '43228', '46537', '47978', '49548', '54016', '60601', '75134', '85713',
  '89119', '90201', '90210', '90501', '90807', '93630', '94108', '98004', 'aa', 'aaa', 'ABTERMCAN', 'BB', 'BCTERMKAN', '',
].map(name => ({ name, live: name === '60601' || name === '90210' }));

const RebuildButton = styled(PushButton)`
  height: 24px;
  margin: 0 2px 0 1px;
`;

const ZoneTree = () => (
  <OpenGroup $openRight>
    <GroupTitle>Zone Tree</GroupTitle>
    <TreePanes>
      <Pane $open><Tree nodes={countries} /></Pane>
      <TreeSide>
        <Pane>
          <PaneRow>
            <Tree nodes={zones} />
            <ScrollBar vertical thumb={310} rest={183} />
          </PaneRow>
          <ScrollBar corner thumb={79} rest={11} />
        </Pane>
        <RebuildButton><Icon name="tree" size={14} />Rebuild Zone Tree</RebuildButton>
      </TreeSide>
    </TreePanes>
  </OpenGroup>
);

const CodesWindow = () => (
  <Window $side="right">
    <WindowTop
      clip
      icon="docGear"
      title="Codes Maintenance @ E242MO [TMWIN - COMPANY One aaaaaaaaaaaaaaaaaaaaaaaaaaaaaaaaaaaaEND]"
      menus={['_File', '_Multi-Company', '_View', '_Tools', '_Help']}
    />
    <ToolBar $size="large"><Tools large items={[...COMMON, '|']} /></ToolBar>
    <ToolBar $size="second">
      <Tools
        large
        items={[
          'percent', 'scroll', 'checklist', 'chart', 'box', 'copyCheck', 'flag', 'arrowTable', 'bomb', 'agent', 'mailCheck', 'gauge', 'recycle',
          'clip', 'nodes', 'calendar', 'camera', 'factory', 'database', 'books', 'form', 'flag', 'meshX', 'mesh', 'infoDoc', 'blocks',
        ]}
      />
    </ToolBar>
    <CodesBody>
      <ZoneForm />
      <ZoneTree />
    </CodesBody>
  </Window>
);

/* ---------- callout drawn over both windows ---------- */

const Callout = styled.svg`
  position: absolute;
  inset: 0;
  width: 100%;
  height: 100%;
  pointer-events: none;
  filter: drop-shadow(3px 3px 2px rgba(0, 0, 0, 0.45));
`;
const Defs = styled.svg`
  position: absolute;
  width: 0;
  height: 0;
`;

export default function App() {
  return (
    <Desktop>
      <Global />
      <Defs>
        <defs>
          <linearGradient id="blue" x1="0" y1="0" x2="0" y2="1">
            <stop offset="0" stopColor="#4aa3f7" />
            <stop offset="1" stopColor="#0d6fdc" />
          </linearGradient>
          <radialGradient id="ball" cx=".38" cy=".32" r=".7">
            <stop offset="0" stopColor="#d2d2d2" />
            <stop offset=".55" stopColor="#a2a2a2" />
            <stop offset="1" stopColor="#858585" />
          </radialGradient>
          <radialGradient id="ocean" cx=".38" cy=".3" r=".75">
            <stop offset="0" stopColor="#8fd0ff" />
            <stop offset=".5" stopColor="#1d78dd" />
            <stop offset="1" stopColor="#0a3f96" />
          </radialGradient>
        </defs>
      </Defs>
      <RateWindow />
      <Behind>
        <BehindLine>ju</BehindLine>
        <BehindLine>D</BehindLine>
        <BehindLine $gap={220}>g</BehindLine>
        <BehindLine $gap={146}>d</BehindLine>
        <BehindCard />
      </Behind>
      <CodesWindow />
      <Callout>
        <g fill="none" stroke="#f00" strokeWidth="2">
          <path d="M308 152h172v65H308zM1284 410h98v41h-98z" />
          <path d="M480 194 1269 429" strokeWidth="1.500" />
        </g>
        <path d="M1279 432l-12.500.5 2.500-8z" fill="#f00" />
      </Callout>
    </Desktop>
  );
}
